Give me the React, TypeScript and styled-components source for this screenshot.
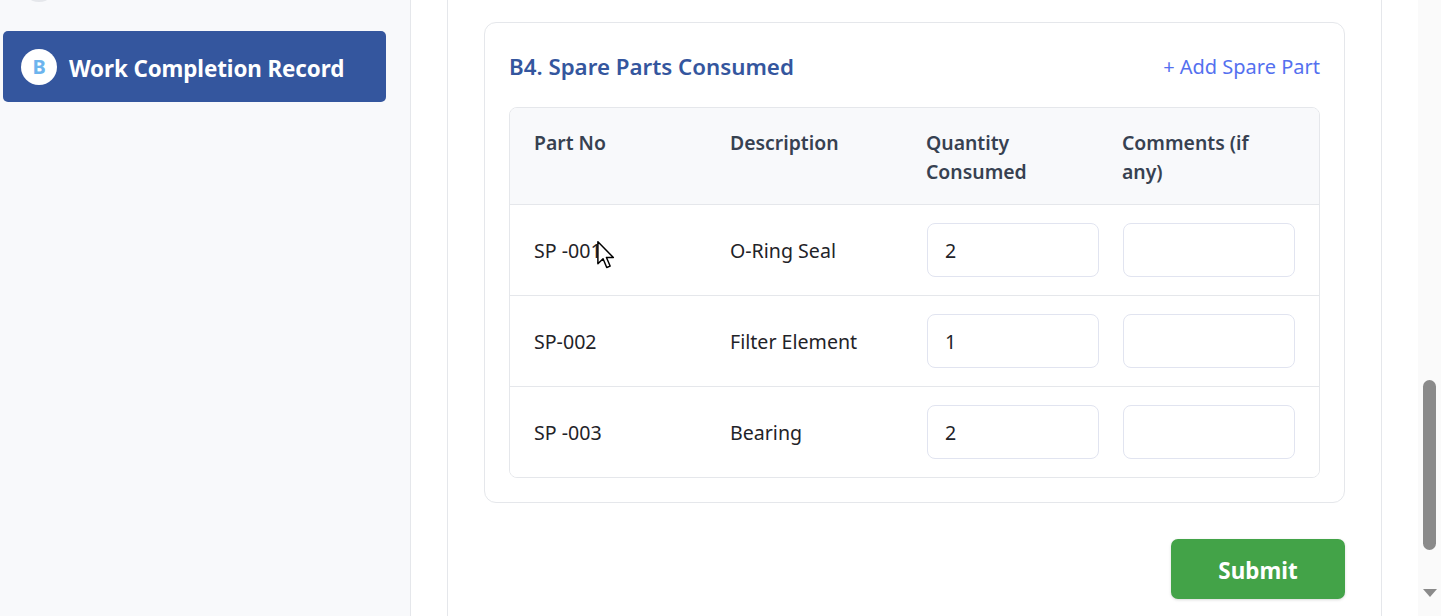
import React from "react";
import styled, { createGlobalStyle } from "styled-components";

const Global = createGlobalStyle`
  html, body { margin: 0; padding: 0; height: 100%; overflow: hidden; }
  body { font-family: "Noto Sans", "Open Sans", Arial, sans-serif; background: #fff; }
  #root { height: 100%; }
  * { box-sizing: border-box; }
`;

const Page = styled.div`
  display: flex;
  width: 1446px;
  height: 616px;
  position: relative;
  overflow: hidden;
`;

const Sidebar = styled.aside`
  width: 411px;
  flex: none;
  background: #f8f9fb;
  border-right: 1px solid #e5e7eb;
  padding: 0 24px 0 3px;
`;

const NavList = styled.nav`
  display: flex;
  flex-direction: column;
  gap: 12px;
  margin-top: -52px;
`;

const NavItem = styled.div<{ $active?: boolean }>`
  height: 71px;
  display: flex;
  align-items: center;
  gap: 12px;
  padding: 0 0 0 18px;
  border-radius: 5px;
  background: ${(p) => (p.$active ? "#34569e" : "transparent")};
  color: ${(p) => (p.$active ? "#ffffff" : "#6b7280")};
  font-size: 22.4px;
  font-weight: 700;
  letter-spacing: -0.1px;
`;

const NavLabel = styled.span`
  padding-top: 3px;
`;

const Badge = styled.span<{ $active?: boolean }>`
  width: 36px;
  height: 36px;
  border-radius: 50%;
  flex: none;
  display: flex;
  align-items: center;
  justify-content: center;
  background: ${(p) => (p.$active ? "#ffffff" : "#e5e7eb")};
  color: ${(p) => (p.$active ? "#6cb4ee" : "#9ca3af")};
  font-size: 20px;
  font-weight: 700;
`;

const Main = styled.main`
  flex: 1;
  padding: 0 36px;
  display: flex;
`;

const Container = styled.div`
  flex: 1;
  border-left: 1px solid #e5e7eb;
  border-right: 1px solid #e5e7eb;
  padding: 22px 36px 0 36px;
  display: flex;
  flex-direction: column;
`;

const Card = styled.section`
  border: 1px solid #e5e7eb;
  border-radius: 12px;
  padding: 24px;
  background: #fff;
`;

const CardHeader = styled.div`
  display: flex;
  align-items: center;
  justify-content: space-between;
  height: 40px;
  margin-bottom: 20px;
`;

const Title = styled.h2`
  margin: 0;
  font-size: 22.3px;
  font-weight: 600;
  color: #34569e;
  line-height: 38px;
`;

const AddLink = styled.button`
  border: none;
  background: none;
  padding: 0;
  font-family: inherit;
  font-size: 20px;
  line-height: 38px;
  color: #5470ef;
  cursor: pointer;
`;

const Table = styled.div`
  border: 1px solid #e5e7eb;
  border-radius: 8px;
  overflow: hidden;
`;

const Row = styled.div<{ $head?: boolean }>`
  display: grid;
  grid-template-columns: 196px 196px 196px 1fr;
  background: ${(p) => (p.$head ? "#f8f9fb" : "#fff")};
  border-top: ${(p) => (p.$head ? "none" : "1px solid #e5e7eb")};
  padding: ${(p) => (p.$head ? "20px 0 18px" : "18px 0")};
  align-items: ${(p) => (p.$head ? "start" : "center")};
`;

const HeadCell = styled.div`
  padding: 0 40px 0 24px;
  font-size: 19.4px;
  line-height: 29px;
  font-weight: 600;
  color: #374151;
`;

const Cell = styled.div`
  padding-left: 24px;
  font-size: 19.6px;
  line-height: 28px;
  padding-top: 2px;
  color: #1f2328;
  &:last-child { padding-right: 24px; }
`;

const InputCell = styled(Cell)`
  padding-right: 0;
  padding-left: 25px;
`;

const Field = styled.input`
  width: 172px;
  height: 54px;
  border: 1px solid #e1e4f0;
  border-radius: 8px;
  padding: 0 17px;
  margin-top: -2px;
  font-family: inherit;
  font-size: 19.6px;
  color: #1f2328;
  background: #fff;
  outline: none;
  display: block;
`;

const CommentCell = styled(Cell)`
  padding-left: 25px;
`;

const Actions = styled.div`
  display: flex;
  justify-content: flex-end;
  margin-top: 36px;
`;

const SubmitButton = styled.button`
  width: 174px;
  height: 60px;
  border: none;
  border-radius: 7px;
  background: #43a348;
  color: #fff;
  font-family: inherit;
  font-size: 22.4px;
  font-weight: 700;
  padding-top: 3px;
  box-shadow: 0 1px 3px rgba(0, 0, 0, 0.15);
  cursor: pointer;
`;

const ScrollTrack = styled.div`
  width: 23px;
  flex: none;
  background: #fafafa;
  display: flex;
  flex-direction: column;
  align-items: center;
  padding-top: 380px;
  margin-right: 5px;
`;

const ScrollThumb = styled.div`
  width: 13px;
  height: 170px;
  border-radius: 7px;
  background: #8a8a8a;
`;

const ScrollArrow = styled.div`
  margin-top: 39px;
  width: 0;
  height: 0;
  border-left: 7px solid transparent;
  border-right: 7px solid transparent;
  border-top: 8px solid #8a8a8a;
`;

const Cursor = styled.svg`
  position: absolute;
  left: 597px;
  top: 241px;
  pointer-events: none;
`;

const rows = [
  { part: "SP -001", desc: "O-Ring Seal", qty: "2" },
  { part: "SP-002", desc: "Filter Element", qty: "1" },
  { part: "SP -003", desc: "Bearing", qty: "2" },
];

export default function App() {
  return (
    <>
      <Global />
      <Page>
        <Sidebar>
          <NavList>
            <NavItem aria-hidden>
              <Badge />
            </NavItem>
            <NavItem $active>
              <Badge $active>B</Badge>
              <NavLabel>Work Completion Record</NavLabel>
            </NavItem>
          </NavList>
        </Sidebar>
        <Main>
          <Container>
            <Card>
              <CardHeader>
                <Title>B4. Spare Parts Consumed</Title>
                <AddLink>+ Add Spare Part</AddLink>
              </CardHeader>
              <Table>
                <Row $head>
                  <HeadCell>Part No</HeadCell>
                  <HeadCell>Description</HeadCell>
                  <HeadCell>Quantity Consumed</HeadCell>
                  <HeadCell>Comments (if any)</HeadCell>
                </Row>
                {rows.map((r) => (
                  <Row key={r.part}>
                    <Cell>{r.part}</Cell>
                    <Cell>{r.desc}</Cell>
                    <InputCell>
                      <Field defaultValue={r.qty} />
                    </InputCell>
                    <CommentCell>
                      <Field defaultValue="" />
                    </CommentCell>
                  </Row>
                ))}
              </Table>
            </Card>
            <Actions>
              <SubmitButton>Submit</SubmitButton>
            </Actions>
          </Container>
        </Main>
        <ScrollTrack>
          <ScrollThumb />
          <ScrollArrow />
        </ScrollTrack>
        <Cursor width="18" height="28" viewBox="0 0 12 19">
          <path
            d="M0.5 0.5 L0.5 15.5 L4 12 L6.5 18 L8.8 17 L6.3 11.2 L11 11.2 Z"
            fill="#fff"
            stroke="#000"
            strokeWidth="1"
            strokeLinejoin="round"
          />
        </Cursor>
      </Page>
    </>
  );
}
